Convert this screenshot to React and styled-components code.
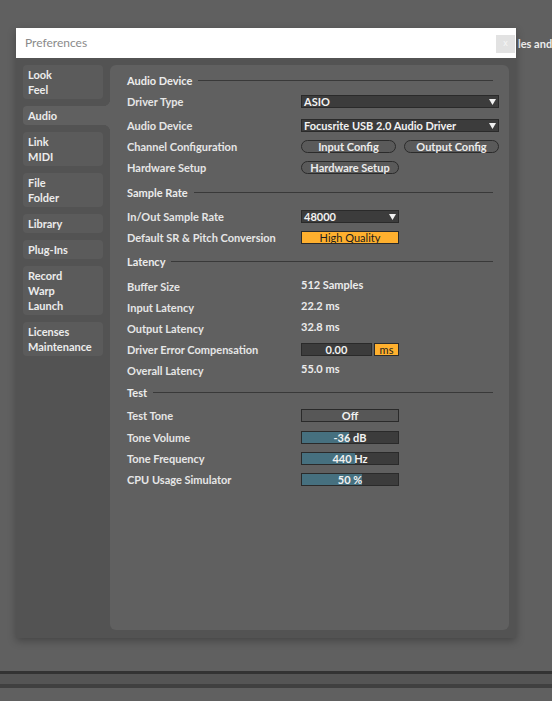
import React from "react";
import styled, { createGlobalStyle } from "styled-components";

const GlobalStyle = createGlobalStyle`
  html, body { margin: 0; padding: 0; background: #606060; }
  body { font-family: Lato, "Liberation Sans", sans-serif; }
  * { box-sizing: border-box; }
`;

const Page = styled.div`
  position: relative;
  width: 552px;
  height: 701px;
  overflow: hidden;
  background: #606060;
  display: flex;
  flex-direction: column;
`;

const BackdropLine = styled.div`
  height: 52px;
  padding: 37px 0 0 518px;
  color: #ececec;
  font-size: 11px;
  font-weight: 700;
  white-space: nowrap;
`;

const Spacer = styled.div`
  flex: 1;
`;

const BottomBar = styled.div`
  height: 17px;
  margin-bottom: 13px;
  background: #555555;
  border-top: 3px solid #333333;
  border-bottom: 4px solid #404040;
`;

const Dialog = styled.div`
  position: absolute;
  left: 16px;
  top: 28px;
  width: 500px;
  height: 610px;
  display: flex;
  flex-direction: column;
  box-shadow: 0 3px 8px rgba(0, 0, 0, 0.28);
`;

const TitleBar = styled.div`
  height: 30px;
  background: #ffffff;
  display: flex;
  align-items: flex-start;
  justify-content: space-between;
  padding-left: 9px;
`;

const Title = styled.div`
  margin-top: 7px;
  font-family: Lato, sans-serif;
  font-size: 12px;
  color: #8a8a8a;
  line-height: 16px;
`;

const CloseButton = styled.div`
  margin-top: 7px;
  margin-right: 1px;
  width: 19px;
  height: 18px;
  background: #e2e2e2;
  color: #f7f7f7;
  font-size: 9px;
  line-height: 17px;
  text-align: center;
  font-family: "Liberation Sans", sans-serif;
`;

const Body = styled.div`
  flex: 1;
  display: flex;
  background: #535353;
  padding: 7px 7px 8px 0;
`;

const Sidebar = styled.div`
  width: 94px;
  flex: none;
  padding-left: 7px;
  display: flex;
  flex-direction: column;
  gap: 7px;
`;

const Tab = styled.div`
  position: relative;
  width: ${(p) => (p.$active ? "87px" : "80px")};
  padding: 2px 5px;
  border-radius: ${(p) => (p.$active ? "4px 0 0 4px" : "4px")};
  background: ${(p) => (p.$active ? "#606060" : "#5b5b5b")};
  color: #ececec;
  font-size: 11px;
  font-weight: 700;
  line-height: 15px;
  white-space: nowrap;

  ${(p) =>
    p.$active &&
    `
    &::before, &::after {
      content: "";
      position: absolute;
      right: 0;
      width: 7px;
      height: 7px;
    }
    &::before {
      top: -7px;
      background: radial-gradient(circle at 0 0, transparent 7px, #606060 7.5px);
    }
    &::after {
      bottom: -7px;
      background: radial-gradient(circle at 0 100%, transparent 7px, #606060 7.5px);
    }
  `}
`;

const TabLine = styled.div``;

const Panel = styled.div`
  flex: 1;
  min-width: 0;
  background: #606060;
  border-radius: 6px;
  padding: 5px 10px 0 17px;
  display: flex;
  flex-direction: column;
`;

const SectionHeader = styled.div`
  height: 21px;
  margin-top: ${(p) => p.$mt || 0}px;
  display: flex;
  align-items: center;
  color: #ececec;
  font-size: 11px;
  font-weight: 700;
  &::after {
    content: "";
    flex: 1;
    height: 1px;
    margin: 0 6px 0 6px;
    background: #393939;
  }
`;

const Row = styled.div`
  height: 21px;
  margin-top: ${(p) => p.$mt || 0}px;
  display: flex;
  align-items: center;
`;

const Label = styled.div`
  width: 174px;
  flex: none;
  color: #e6e6e6;
  font-size: 11px;
  font-weight: 700;
  white-space: nowrap;
`;

const Controls = styled.div`
  display: flex;
  align-items: center;
  gap: ${(p) => p.$gap || 8}px;
`;

const Select = styled.div`
  width: ${(p) => p.$w}px;
  height: 13px;
  background: #3c3c3c;
  border: 1px solid #2a2a2a;
  display: flex;
  align-items: center;
  justify-content: space-between;
  padding: 0 2px 0 2px;
  color: #f2f2f2;
  font-size: 11px;
  font-weight: 700;
  white-space: nowrap;
`;

const Arrow = () => (
  <svg width="7" height="6" viewBox="0 0 7 6">
    <polygon points="0,0 7,0 3.5,6" fill="#f0f0f0" />
  </svg>
);

const Pill = styled.div`
  width: ${(p) => p.$w}px;
  height: 13px;
  border-radius: 7px;
  border: 1px solid #2b2b2b;
  background: #5a5a5a;
  color: #ececec;
  font-size: 11px;
  font-weight: 700;
  display: flex;
  align-items: center;
  justify-content: center;
  white-space: nowrap;
`;

const Box = styled.div`
  width: ${(p) => p.$w}px;
  height: 13px;
  border: 1px solid #2a2a2a;
  background: ${(p) => (p.$orange ? "#ffb02e" : p.$flat ? "#575757" : "#3c3c3c")};
  color: ${(p) => (p.$orange ? "#1c1c1c" : "#f2f2f2")};
  font-size: 11px;
  font-weight: ${(p) => (p.$orange ? 400 : 700)};
  display: flex;
  align-items: center;
  justify-content: center;
  position: relative;
  overflow: hidden;
  white-space: nowrap;
`;

const SliderFill = styled.div`
  position: absolute;
  left: 0;
  top: 0;
  bottom: 0;
  background: #46707f;
`;

const SliderText = styled.span`
  position: relative;
`;

const Value = styled.div`
  color: #ececec;
  font-size: 11px;
  font-weight: 700;
  margin-bottom: 4px;
`;

const tabs = [
  ["Look", "Feel"],
  ["Audio"],
  ["Link", "MIDI"],
  ["File", "Folder"],
  ["Library"],
  ["Plug-Ins"],
  ["Record", "Warp", "Launch"],
  ["Licenses", "Maintenance"],
];

const Slider = ({ value, pct }) => (
  <Box $w={98}>
    <SliderFill style={{ width: `${pct}%` }} />
    <SliderText>{value}</SliderText>
  </Box>
);

export default function App() {
  return (
    <>
      <GlobalStyle />
      <Page>
        <BackdropLine>les and</BackdropLine>
        <Spacer />
        <BottomBar />
        <Dialog>
          <TitleBar>
            <Title>Preferences</Title>
            <CloseButton>x</CloseButton>
          </TitleBar>
          <Body>
            <Sidebar>
              {tabs.map((t, i) => (
                <Tab key={i} $active={t[0] === "Audio"}>
                  {t.map((l) => (
                    <TabLine key={l}>{l}</TabLine>
                  ))}
                </Tab>
              ))}
            </Sidebar>
            <Panel>
              <SectionHeader>Audio Device</SectionHeader>
              <Row>
                <Label>Driver Type</Label>
                <Select $w={198}>
                  <span>ASIO</span>
                  <Arrow />
                </Select>
              </Row>
              <Row $mt={3}>
                <Label>Audio Device</Label>
                <Select $w={198}>
                  <span>Focusrite USB 2.0 Audio Driver</span>
                  <Arrow />
                </Select>
              </Row>
              <Row>
                <Label>Channel Configuration</Label>
                <Controls>
                  <Pill $w={95}>Input Config</Pill>
                  <Pill $w={95}>Output Config</Pill>
                </Controls>
              </Row>
              <Row>
                <Label>Hardware Setup</Label>
                <Pill $w={98}>Hardware Setup</Pill>
              </Row>

              <SectionHeader $mt={4}>Sample Rate</SectionHeader>
              <Row $mt={3}>
                <Label>In/Out Sample Rate</Label>
                <Select $w={98}>
                  <span>48000</span>
                  <Arrow />
                </Select>
              </Row>
              <Row>
                <Label>Default SR &amp; Pitch Conversion</Label>
                <Box $w={98} $orange>
                  High Quality
                </Box>
              </Row>

              <SectionHeader $mt={3}>Latency</SectionHeader>
              <Row $mt={4}>
                <Label>Buffer Size</Label>
                <Value>512 Samples</Value>
              </Row>
              <Row>
                <Label>Input Latency</Label>
                <Value>22.2 ms</Value>
              </Row>
              <Row>
                <Label>Output Latency</Label>
                <Value>32.8 ms</Value>
              </Row>
              <Row>
                <Label>Driver Error Compensation</Label>
                <Controls $gap={2}>
                  <Box $w={71}>0.00</Box>
                  <Box $w={25} $orange>
                    ms
                  </Box>
                </Controls>
              </Row>
              <Row>
                <Label>Overall Latency</Label>
                <Value>55.0 ms</Value>
              </Row>

              <SectionHeader $mt={1}>Test</SectionHeader>
              <Row $mt={2}>
                <Label>Test Tone</Label>
                <Box $w={98} $flat>
                  Off
                </Box>
              </Row>
              <Row $mt={1}>
                <Label>Tone Volume</Label>
                <Slider value="-36 dB" pct={49} />
              </Row>
              <Row>
                <Label>Tone Frequency</Label>
                <Slider value="440 Hz" pct={55} />
              </Row>
              <Row>
                <Label>CPU Usage Simulator</Label>
                <Slider value="50 %" pct={62} />
              </Row>
            </Panel>
          </Body>
        </Dialog>
      </Page>
    </>
  );
}
